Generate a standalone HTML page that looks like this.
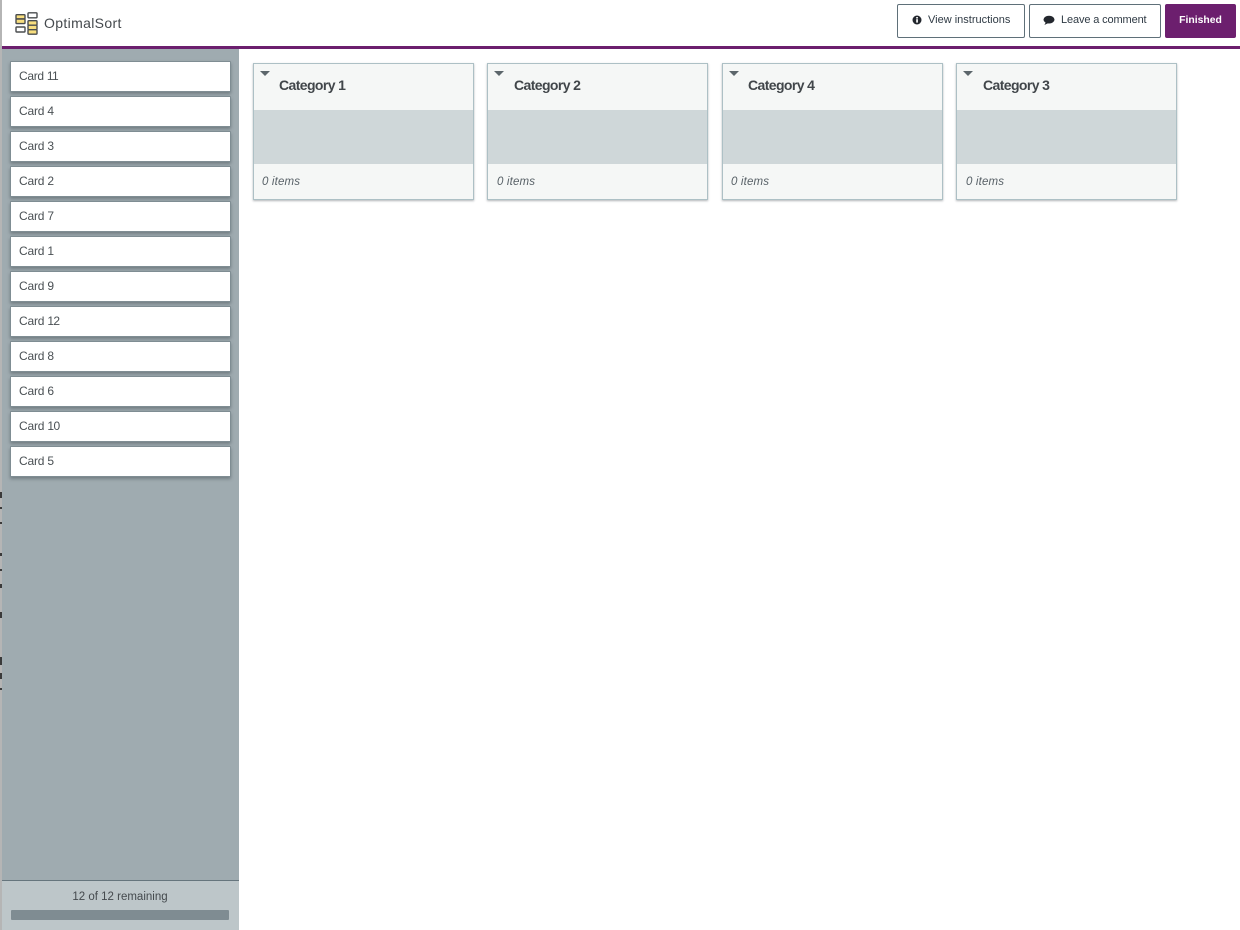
<!DOCTYPE html>
<html><head><meta charset="utf-8"><style>
*{box-sizing:border-box}
html,body{margin:0;padding:0;width:1240px;height:930px;overflow:hidden;background:#fff;font-family:"Liberation Sans",sans-serif;color:#42474b}
.abs,.card,.cat,.btn,.bar{position:absolute}
.card{left:10px;width:221px;height:31px;background:#fff;border:1px solid #7f8d93;border-radius:1px;box-shadow:0 2px 3px rgba(60,70,75,.45);font-size:12px;line-height:28px;padding-left:8px;color:#4a5054;letter-spacing:-.2px}
.cat{top:63px;width:221px;height:137px;background:#f5f7f6;border:1px solid #adc0c5;box-shadow:0 1px 2px rgba(60,70,75,.4)}
.cat .tri{position:absolute;left:6px;top:7px;width:0;height:0;border-left:5.5px solid transparent;border-right:5.5px solid transparent;border-top:5.5px solid #5c666b}
.cat .t{position:absolute;left:25px;top:13px;font-size:14px;line-height:17px;font-weight:bold;color:#41464a;letter-spacing:-.6px}
.cat .g{position:absolute;left:0;right:0;top:46px;height:54px;background:#cfd7d9}
.cat .n{position:absolute;left:8px;top:111px;font-size:11.5px;line-height:14px;font-style:italic;color:#586167;letter-spacing:.15px}
.btn{top:4px;height:34px;border:1px solid #5f7079;border-radius:2px;background:#fff;font-size:11px;line-height:31px;color:#2f3a44;white-space:nowrap}
.btn svg{position:absolute}
.btn span{position:absolute;top:0}
.s{position:absolute;left:0;width:2px;background:#3a3a3a}
</style></head><body>
<div class="abs" style="left:0;top:0;width:1240px;height:46px;background:#fff"></div>
<div class="abs" style="left:1px;top:46px;width:1239px;height:3px;background:#6c1f6e"></div>
<div class="abs" style="left:0;top:0;width:2px;height:930px;background:#b5b5b5"></div>
<div class="abs" style="left:2px;top:49px;width:237px;height:831px;background:#9fabb0"></div>
<div class="abs" style="left:2px;top:880px;width:237px;height:50px;background:#bdc6c9;border-top:1px solid #66757d"></div>
<div class="s" style="top:492px;height:6px"></div>
<div class="s" style="top:507px;height:2px"></div>
<div class="s" style="top:522px;height:2px"></div>
<div class="s" style="top:553px;height:3px"></div>
<div class="s" style="top:569px;height:2px"></div>
<div class="s" style="top:584px;height:4px"></div>
<div class="s" style="top:612px;height:6px"></div>
<div class="s" style="top:657px;height:8px"></div>
<div class="s" style="top:673px;height:6px"></div>
<div class="s" style="top:688px;height:2px"></div>

<svg class="abs" style="left:15px;top:12px" width="23" height="24" viewBox="0 0 23 24">
<g stroke="#4a4d4f" stroke-width="1.4" fill="#f8de7e" stroke-linejoin="round">
<rect x="1" y="2.7" width="9" height="4.3" rx=".8"/><rect x="1" y="7" width="9" height="4.6" rx=".8"/>
<rect x="1" y="15" width="9" height="5" rx=".8" fill="#fff"/>
<rect x="13" y=".8" width="9" height="5" rx=".8" fill="#fff"/>
<rect x="13" y="8.7" width="9" height="4.5" rx=".8"/><rect x="13" y="13.2" width="9" height="4.5" rx=".8"/><rect x="13" y="17.7" width="9" height="4.5" rx=".8"/>
</g></svg>
<div class="abs" style="left:44px;top:15px;font-size:14px;line-height:17px;color:#44494d;letter-spacing:.35px">OptimalSort</div>

<div class="btn" style="left:897px;width:128px"><svg style="left:14px;top:10px" width="10" height="10" viewBox="0 0 10 10"><circle cx="5" cy="5" r="4.5" fill="#23272e"/><rect x="4.2" y="4.2" width="1.7" height="3.4" fill="#fff"/><rect x="4.2" y="2" width="1.7" height="1.5" fill="#fff"/></svg><span style="left:30px">View instructions</span></div>
<div class="btn" style="left:1029px;width:132px"><svg style="left:13px;top:10px" width="12" height="11" viewBox="0 0 12 11"><ellipse cx="6" cy="4.6" rx="5.5" ry="3.9" fill="#23272e"/><path d="M3 7l-1.6 3 4-2z" fill="#23272e"/></svg><span style="left:31px;letter-spacing:-.13px">Leave a comment</span></div>
<div class="btn" style="left:1165px;width:71px;background:#6c1f6e;border-color:#6c1f6e;color:#fff;font-weight:bold;text-align:center;font-size:10.4px">Finished</div>

<div class="card" style="top:61px"><span style="letter-spacing:-.3px">Card </span><span style="letter-spacing:-.7px">11</span></div>
<div class="card" style="top:96px">Card 4</div>
<div class="card" style="top:131px">Card 3</div>
<div class="card" style="top:166px">Card 2</div>
<div class="card" style="top:201px">Card 7</div>
<div class="card" style="top:236px"><span>Card </span><span>1</span></div>
<div class="card" style="top:271px">Card 9</div>
<div class="card" style="top:306px"><span>Card </span><span style="letter-spacing:-.7px">12</span></div>
<div class="card" style="top:341px">Card 8</div>
<div class="card" style="top:376px">Card 6</div>
<div class="card" style="top:411px"><span>Card </span><span style="letter-spacing:-.5px">10</span></div>
<div class="card" style="top:446px">Card 5</div>

<div class="cat" style="left:253px"><div class="tri"></div><div class="t">Category 1</div><div class="g"></div><div class="n">0 items</div></div>
<div class="cat" style="left:487px"><div class="tri"></div><div class="t" style="left:26px">Category 2</div><div class="g"></div><div class="n" style="left:9px">0 items</div></div>
<div class="cat" style="left:722px"><div class="tri"></div><div class="t">Category 4</div><div class="g"></div><div class="n">0 items</div></div>
<div class="cat" style="left:956px"><div class="tri"></div><div class="t" style="left:26px">Category 3</div><div class="g"></div><div class="n" style="left:9px">0 items</div></div>

<div class="abs" style="left:1px;top:890px;width:238px;text-align:center;font-size:11.5px;line-height:14px;color:#44494d">12 of 12 remaining</div>
<div class="bar" style="left:11px;top:910px;width:218px;height:10px;background:#7f8c92;border-radius:1px"></div>
</body></html>
